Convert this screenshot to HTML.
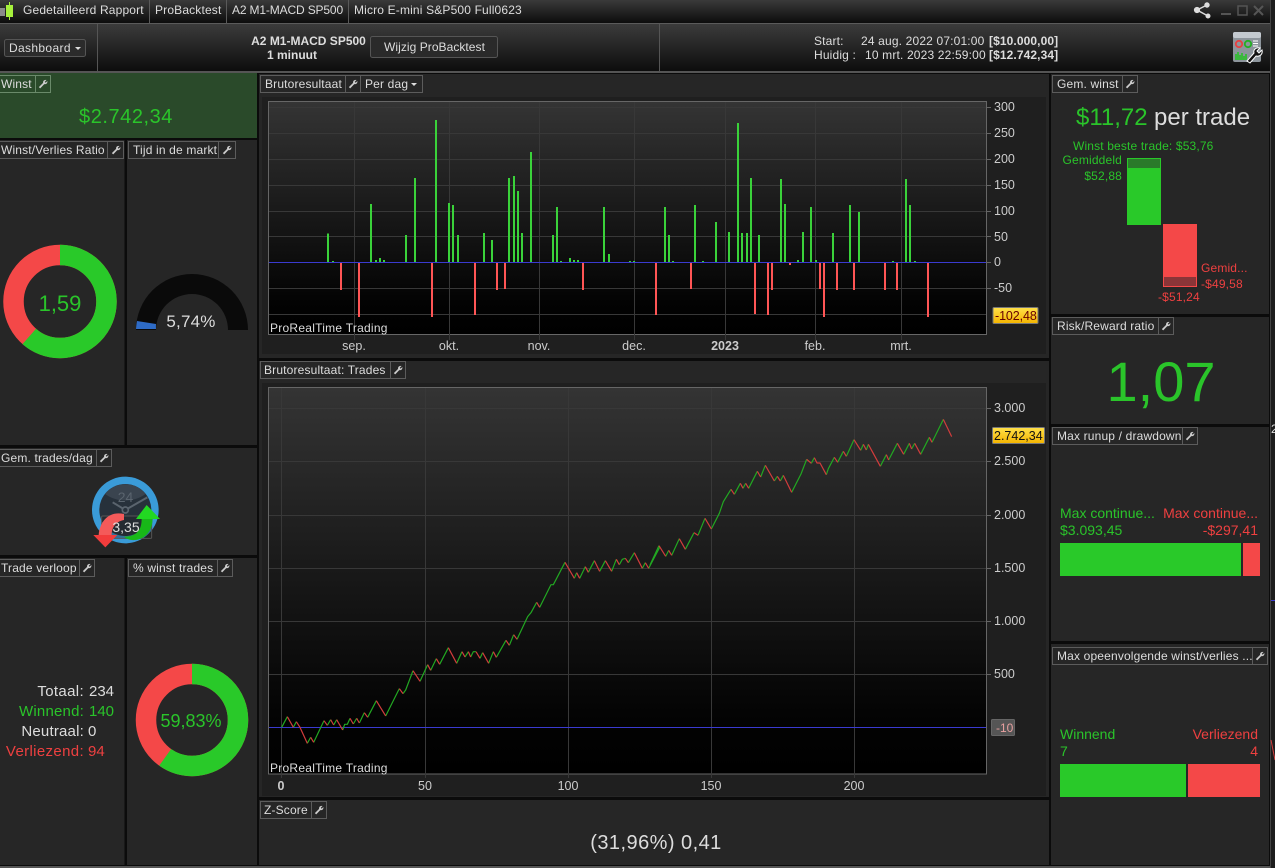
<!DOCTYPE html>
<html lang="nl"><head><meta charset="utf-8"><title>Gedetailleerd Rapport</title>
<style>
html,body{margin:0;padding:0;background:#0b0b0b;width:1275px;height:868px;overflow:hidden}
svg{display:block}
text{font-family:"Liberation Sans",Arial,sans-serif;font-size:12px;letter-spacing:.16px;fill:#ddd}
.g{fill:#2ac42a}.r{fill:#ee4040}
.tab{fill:none;stroke:#5c5c5c;stroke-width:1}
.ax{font-size:12.5px;fill:#ccc;letter-spacing:0}
</style></head>
<body>
<svg width="1275" height="868" viewBox="0 0 1275 868" xmlns="http://www.w3.org/2000/svg">
<defs>
<linearGradient id="b1" x1="0" y1="0" x2="0" y2="1"><stop offset="0" stop-color="#3a3a3a"/><stop offset="1" stop-color="#0c0c0c"/></linearGradient>
<linearGradient id="b2" x1="0" y1="0" x2="0" y2="1"><stop offset="0" stop-color="#3b3b3b"/><stop offset="1" stop-color="#0d0d0d"/></linearGradient>
<linearGradient id="pl" x1="0" y1="0" x2="0" y2="1"><stop offset="0" stop-color="#343434"/><stop offset=".86" stop-color="#030303"/><stop offset="1" stop-color="#000"/></linearGradient>
<linearGradient id="gold" x1="0" y1="0" x2="0" y2="1"><stop offset="0" stop-color="#ffe14a"/><stop offset="1" stop-color="#f4b400"/></linearGradient>
<path id="w" transform="translate(1 1) scale(.85)" d="M1 9.500 6 4.600C5.600 2.600 7.400.6 10 1.200L8 3.200 9 4.400 11 2.400C11.500 5 9.400 6.600 7.400 6.100L2.600 11Z" fill="#ccc"/>
</defs>

<!-- title bar -->
<rect x="0" y="0" width="1270" height="23" fill="url(#b1)"/>
<rect x="0" y="23" width="1270" height="1" fill="#5a5a5a"/>
<rect x="1270" y="0" width="5" height="868" fill="#1d1d1d"/>
<rect x="1270" y="0" width="1" height="868" fill="#444"/>
<rect x="0" y="8" width="5" height="8" fill="#8a8a8a"/><rect x="6" y="5" width="7" height="12" fill="#a6f03c"/><rect x="9" y="2" width="1" height="18" fill="#a6f03c"/>
<rect x="149" y="0" width="1" height="23" fill="#5a5a5a"/><rect x="226" y="0" width="1" height="23" fill="#5a5a5a"/><rect x="348" y="0" width="1" height="23" fill="#5a5a5a"/>
<text x="23" y="14">Gedetailleerd Rapport</text>
<text x="155" y="14">ProBacktest</text>
<text x="232" y="14" style="letter-spacing:-.15px">A2 M1-MACD SP500</text>
<text x="354" y="14">Micro E-mini S&amp;P500 Full0623</text>
<!-- window icons -->
<g fill="#ddd" stroke="#ddd"><path d="M1197 10 1207 5M1197 10 1208 16" stroke-width="1.500" fill="none"/><circle cx="1197" cy="10" r="2.600"/><circle cx="1207" cy="5" r="2.200"/><circle cx="1208" cy="16" r="2"/></g>
<rect x="1221" y="13" width="10" height="2" fill="#555"/>
<rect x="1238" y="6" width="9" height="9" fill="none" stroke="#555" stroke-width="1.500"/>
<path d="M1254 6 1263 15M1263 6 1254 15" stroke="#555" stroke-width="2" fill="none"/>

<!-- toolbar -->
<rect x="0" y="24" width="1270" height="47" fill="url(#b2)"/>
<rect x="0" y="71" width="1270" height="2" fill="#555"/>
<rect x="97" y="24" width="1" height="47" fill="#555"/><rect x="659" y="24" width="1" height="47" fill="#555"/>
<rect x="4.500" y="39.500" width="81" height="17" rx="2" fill="#2b2b2b" stroke="#555"/>
<text x="9" y="52" style="letter-spacing:.35px">Dashboard</text><path d="M75 47h6l-3 3z" fill="#ddd"/>
<text x="308.500" y="45" text-anchor="middle" font-weight="bold" style="letter-spacing:0">A2 M1-MACD SP500</text>
<text x="292" y="59" text-anchor="middle" font-weight="bold" style="letter-spacing:0">1 minuut</text>
<rect x="370.500" y="36.500" width="127" height="21" rx="2" fill="#2a2a2a" stroke="#555"/>
<text x="434.500" y="51" text-anchor="middle" style="letter-spacing:.05px">Wijzig ProBacktest</text>
<text x="814" y="45">Start:</text><text x="861" y="45">24 aug. 2022 07:01:00</text><text x="989" y="45" font-weight="bold" style="letter-spacing:.1px">[$10.000,00]</text>
<text x="814" y="59">Huidig :</text><text x="865" y="59">10 mrt. 2023 22:59:00</text><text x="989" y="59" font-weight="bold" style="letter-spacing:.1px">[$12.742,34]</text>
<!-- tool icon -->
<rect x="1233" y="32" width="28" height="30" rx="2" fill="#8d959c"/><rect x="1233" y="32" width="28" height="6" rx="2" fill="#c4cad0"/>
<circle cx="1239" cy="44" r="3.200" fill="none" stroke="#e84040" stroke-width="1.800"/><circle cx="1248" cy="44" r="3.200" fill="none" stroke="#23b023" stroke-width="1.800"/>
<path d="M1253 41h5M1253 43.500h5M1253 46h5" stroke="#fff"/>
<path d="M1236 60v-6M1238 60v-8M1240 60v-5M1242 60v-7M1244 60v-4M1246 60v-6" stroke="#27c227" stroke-width="1.600"/>
<path d="M1247 61 1254 53C1253 50 1256 47 1260 48L1257 51 1259 53 1262 50C1263 54 1260 57 1256 56L1250 63Z" fill="#111" stroke="#fff"/>

<!-- panels -->
<g fill="#262626">
<rect x="0" y="73" width="257" height="65" fill="#2a4a2a"/>
<rect x="0" y="140" width="124.500" height="305"/><rect x="127" y="140" width="130" height="305"/>
<rect x="0" y="448" width="257" height="107"/>
<rect x="0" y="558" width="124.500" height="307"/><rect x="127" y="558" width="130" height="307"/>
<rect x="259" y="74" width="790" height="284"/><rect x="259" y="361" width="790" height="436"/><rect x="259" y="800" width="790" height="65"/>
<rect x="1051" y="74" width="218" height="240"/><rect x="1051" y="317" width="218" height="107"/><rect x="1051" y="427" width="218" height="214"/><rect x="1051" y="644" width="218" height="221"/>
</g>
<rect x="0" y="866" width="1270" height="2" fill="#555"/>

<!-- tabs -->
<g class="tab">
<path d="M-1 75.500H50.500V92.500H-1M35.500 75.500V92.500" stroke="#6a8a6a"/>
<path d="M-1 141.500H123.500V158.500H-1M107.500 141.500V158.500"/>
<path d="M128.500 141.500H235.500V158.500H128.500ZM218.500 141.500V158.500"/>
<path d="M-1 449.500H111.500V466.500H-1M96.500 449.500V466.500"/>
<path d="M-1 559.500H94.500V576.500H-1M79.500 559.500V576.500"/>
<path d="M128.500 559.500H232.500V576.500H128.500ZM217.500 559.500V576.500"/>
<path d="M260.500 75.500H422.500V92.500H260.500ZM345.500 75.500V92.500M360.500 75.500V92.500"/>
<path d="M260.500 361.500H405.500V378.500H260.500ZM390.500 361.500V378.500"/>
<path d="M260.500 801.500H326.500V818.500H260.500ZM311.500 801.500V818.500"/>
<path d="M1052.500 75.500H1137.500V92.500H1052.500ZM1122.500 75.500V92.500"/>
<path d="M1052.500 317.500H1173.500V334.500H1052.500ZM1158.500 317.500V334.500"/>
<path d="M1052.500 427.500H1197.500V444.500H1052.500ZM1182.500 427.500V444.500"/>
<path d="M1052.500 647.500H1267.500V664.500H1052.500ZM1252.500 647.500V664.500"/>
</g>
<text x="1" y="88">Winst</text><use href="#w" x="37" y="78"/>
<text x="1" y="154">Winst/Verlies Ratio</text><use href="#w" x="110" y="144"/>
<text x="133" y="154">Tijd in de markt</text><use href="#w" x="221" y="144"/>
<text x="1" y="462">Gem. trades/dag</text><use href="#w" x="98" y="452"/>
<text x="1" y="572">Trade verloop</text><use href="#w" x="81" y="562"/>
<text x="133" y="572">% winst trades</text><use href="#w" x="219" y="562"/>
<text x="265" y="88">Brutoresultaat</text><use href="#w" x="347" y="78"/><text x="365" y="88">Per dag</text><path d="M411 83h6l-3 3z" fill="#ddd"/>
<text x="264" y="374">Brutoresultaat: Trades</text><use href="#w" x="392" y="364"/>
<text x="264" y="814">Z-Score</text><use href="#w" x="313" y="804"/>
<text x="1057" y="88">Gem. winst</text><use href="#w" x="1124" y="78"/>
<text x="1057" y="330">Risk/Reward ratio</text><use href="#w" x="1160" y="320"/>
<text x="1057" y="440">Max runup / drawdown</text><use href="#w" x="1184" y="430"/>
<text x="1057" y="660">Max opeenvolgende winst/verlies ...</text><use href="#w" x="1254" y="650"/>

<!-- left values -->
<text x="126" y="123" text-anchor="middle" class="g" style="font-size:20px;letter-spacing:.55px">$2.742,34</text>
<circle cx="60" cy="301.500" r="46.500" fill="none" stroke="#f44848" stroke-width="20.500"/>
<circle cx="60" cy="301.500" r="46.500" fill="none" stroke="#29c929" stroke-width="20.500" stroke-dasharray="179.400 292.200" transform="rotate(-90 60 301.500)"/>
<text x="60" y="311" text-anchor="middle" class="g" style="font-size:22px;letter-spacing:0">1,59</text>
<path d="M136 330A56 56 0 0 1 248 330H228A36 36 0 0 0 156 330Z" fill="#0a0a0a"/>
<path d="M136 329A56 56 0 0 1 137 321L156 324A36 36 0 0 0 156 329Z" fill="#2e6bc6"/>
<text x="191" y="327" text-anchor="middle" style="font-size:17px;letter-spacing:.2px">5,74%</text>

<g transform="translate(0,440) scale(.3333)">
<circle cx="376" cy="210" r="100" fill="#3a9bd8"/><circle cx="376" cy="210" r="78" fill="#27313b"/>
<path d="M315 162A78 78 0 0 1 437 162C400 188 352 188 315 162Z" fill="#3a444f"/>
<path d="M338 187 376 210 442 172" stroke="#5a646e" stroke-width="6" fill="none"/><circle cx="376" cy="210" r="9" fill="#27313b" stroke="#5a646e" stroke-width="5"/>
<rect x="305" y="228" width="150" height="67" fill="#222" fill-opacity=".35" stroke="#555" stroke-width="3" rx="3"/>
<path d="M372 222C330 212 300 240 296 285L335 285C335 265 345 245 372 240Z" fill="#f45a5a"/>
<path d="M280 285H352L316 322Z" fill="#f23c3c"/>
<path d="M425 237C425 270 410 290 372 290 390 310 455 305 458 237Z" fill="#18b818"/>
<path d="M408 237H480L440 195Z" fill="#22d822"/>
</g>
<text x="125.500" y="502" text-anchor="middle" style="font-size:14px;fill:#5a646e;letter-spacing:0">24</text>
<text x="126" y="532" text-anchor="middle" style="font-size:14px;letter-spacing:0;fill:#ddd">3,35</text>

<text x="84" y="696" text-anchor="end" style="font-size:15px;letter-spacing:.35px">Totaal:</text><text x="89" y="696" style="font-size:15px;letter-spacing:0">234</text>
<text x="84" y="716" text-anchor="end" class="g" style="font-size:15px;letter-spacing:.2px">Winnend:</text><text x="89" y="716" class="g" style="font-size:15px;letter-spacing:0">140</text>
<text x="84" y="736" text-anchor="end" style="font-size:15px;letter-spacing:.2px">Neutraal:</text><text x="88" y="736" style="font-size:15px;letter-spacing:0">0</text>
<text x="84" y="756" text-anchor="end" class="r" style="font-size:15px;letter-spacing:.35px">Verliezend:</text><text x="88" y="756" class="r" style="font-size:15px;letter-spacing:0">94</text>
<circle cx="192" cy="720" r="46" fill="none" stroke="#f44848" stroke-width="20.500"/>
<circle cx="192" cy="720" r="46" fill="none" stroke="#29c929" stroke-width="20.500" stroke-dasharray="172.900 289" transform="rotate(-90 192 720)"/>
<text x="191" y="727" text-anchor="middle" class="g" style="font-size:18px;letter-spacing:0">59,83%</text>

<!-- chart 1 -->
<rect x="262" y="97" width="784" height="257" fill="#1f1f1f"/>
<rect x="268.500" y="101.500" width="718" height="233" fill="url(#pl)" stroke="#666" stroke-width="1"/>
<path d="M269 107.500H986M269 133.500H986M269 159.500H986M269 185.500H986M269 211.500H986M269 236.500H986M269 288.500H986M269 314.500H986M354.500 102V340M449.500 102V340M539.500 102V340M634.500 102V340M725.500 102V340M815.500 102V340M901.500 102V340" stroke="#383838" fill="none"/>
<path d="M987 107.500H991M987 133.500H991M987 159.500H991M987 185.500H991M987 211.500H991M987 236.500H991M987 262.500H991M987 288.500H991" stroke="#666" fill="none"/>
<g transform="translate(260,95) scale(.33333)" stroke-width="6" fill="none" shape-rendering="crispEdges">
<path stroke="#3ad23a" d="M204 501V415M219 501V498M333 501V327M348 501V495M360 501V489M372 501V495M438 501V420M465 501V249M528 501V75M567 501V324M579 501V330M594 501V420M672 501V414M696 501V435M747 501V249M762 501V243M774 501V288M786 501V414M813 501V171M879 501V420M891 501V336M903 501V498M930 501V489M942 501V495M954 501V495M1032 501V336M1047 501V477M1110 501V498M1122 501V498"/>
<path stroke="#ff5555" d="M243 504V585M297 504V666M516 504V666M645 504V660M711 504V585M735 504V582M969 504V585M1188 504V660"/>
</g>
<g transform="translate(650,95) scale(.33333)" stroke-width="6" fill="none" shape-rendering="crispEdges">
<path stroke="#3ad23a" d="M45 501V336M57 501V420M69 501V498M135 501V330M159 501V498M198 501V381M237 501V411M264 501V84M276 501V414M291 501V414M303 501V249M327 501V420M393 501V252M405 501V327M444 501V495M459 501V411M483 501V336M498 501V495M549 501V414M600 501V330M627 501V351M729 501V498M768 501V252M780 501V330M795 501V498"/>
<path stroke="#ff5555" d="M123 504V582M315 504V657M354 504V660M366 504V585M420 504V510M510 504V582M522 504V666M561 504V585M612 504V585M705 504V585M741 504V585M834 504V666"/>
</g>
<rect x="269" y="262" width="717" height="1" fill="#3a3ad0"/>
<text x="270" y="332" style="letter-spacing:.25px">ProRealTime Trading</text>
<text x="354" y="350" text-anchor="middle" class="ax">sep.</text><text x="449" y="350" text-anchor="middle" class="ax">okt.</text><text x="539" y="350" text-anchor="middle" class="ax">nov.</text><text x="634" y="350" text-anchor="middle" class="ax">dec.</text><text x="725" y="350" text-anchor="middle" class="ax" font-weight="bold">2023</text><text x="815" y="350" text-anchor="middle" class="ax">feb.</text><text x="901" y="350" text-anchor="middle" class="ax">mrt.</text>
<text x="994" y="111" class="ax">300</text><text x="994" y="137" class="ax">250</text><text x="994" y="163" class="ax">200</text><text x="994" y="189" class="ax">150</text><text x="994" y="215" class="ax">100</text><text x="994" y="241" class="ax">50</text><text x="994" y="266" class="ax">0</text><text x="994" y="292" class="ax">-50</text>
<rect x="993" y="307.500" width="45" height="16" rx="1" fill="url(#gold)" stroke="#777"/>
<text x="995" y="320" style="font-size:12.500px;fill:#600;letter-spacing:-.1px">-102,48</text>

<!-- chart 2 -->
<rect x="262" y="383" width="784" height="413" fill="#1f1f1f"/>
<rect x="268.500" y="387.500" width="718" height="386.500" fill="url(#pl)" stroke="#666" stroke-width="1"/>
<path d="M269 408.500H986M269 461.500H986M269 515.500H986M269 568.500H986M269 621.500H986M269 674.500H986M281.500 388V778M425.500 388V778M568.500 388V778M711.500 388V778M854.500 388V778" stroke="#383838" fill="none"/>
<path d="M987 408.500H991M987 461.500H991M987 515.500H991M987 568.500H991M987 621.500H991M987 674.500H991" stroke="#666" fill="none"/>
<rect x="269" y="727" width="717" height="1" fill="#3a3ad0"/>
<g transform="translate(260,540) scale(.33333)" fill="none" stroke-width="3.600" stroke-linejoin="round">
<path stroke="#22a822" d="M65 562 82 530M100 562 109 545M142 610 152 592M161 607 192 542M202 556 212 539M221 555 230 539M248 570 254 553 262 553 270 535M280 552 290 535M298 549 313 518M323 532 349 482M377 528 418 446M429 461 437 450 459 392M480 424 503 374M512 391 529 356M539 373 565 323M590 370 606 335M615 351 625 335M632 351 640 335 648 335M660 355 668 338M686 370 700 335M709 352 738 301M748 316 761 284M771 298 803 230 813 218 830 187M839 202 873 134 880 134 915 67M943 115 950 98M959 115 976 80M985 97 1003 62M1019 94 1036 62M1055 94 1069 58M1078 74 1087 58 1096 55M1105 68 1123 38M1147 85 1156 68M1166 85 1200 20"/>
<path stroke="#d23c3c" d="M82 530 100 562M109 545 120 562 142 610M152 592 161 607M192 542 202 556M212 539 221 555M230 539 248 570M270 535 280 552M290 535 298 549M313 518 323 532M349 482 377 528M418 446 429 461M459 392 480 424M503 374 512 391M529 356 539 373M565 323 590 370M606 335 615 351M625 335 632 351M648 335 660 355M668 338 686 370M700 335 709 352M738 301 748 316M761 284 771 298M830 187 839 202M915 67 943 115M950 98 959 115M976 80 985 97M1003 62 1019 94M1036 62 1055 94M1069 58 1078 74M1096 55 1105 68M1123 38 1147 85M1156 68 1166 85"/>
</g>
<g transform="translate(650,390) scale(.33333)" fill="none" stroke-width="3.600" stroke-linejoin="round">
<path stroke="#22a822" d="M0 525 27 467M47 499 56 481M65 496 88 446M106 478 132 428M144 436 165 385M184 417 208 370 220 335 243 298M253 313 271 280M279 295 287 280M296 295 322 244M332 261 346 226M373 273 382 259M391 273 400 256M425 307 453 252 470 208M484 220 493 203M529 254 535 236 553 202M563 217 580 184M589 199 612 149M632 181 640 163M649 180 655 163M691 229 709 194M716 210 742 160M761 193 778 160M785 177 794 160M812 193 838 142M846 157 880 88"/>
<path stroke="#d23c3c" d="M27 467 47 499M56 481 65 496M88 446 106 478M132 428 144 436M165 385 184 417M243 298 253 313M271 280 279 295M287 280 296 295M322 244 332 261M346 226 373 273M382 259 391 273M400 256 425 307M470 208 484 220M493 203 501 219 510 219 529 254M553 202 563 217M580 184 589 199M612 149 632 181M640 163 649 180M655 163 691 229M709 194 716 210M742 160 761 193M778 160 785 177M794 160 812 193M838 142 846 157M880 88 905 140"/>
</g>
<text x="270" y="772" style="letter-spacing:.25px">ProRealTime Trading</text>
<text x="281" y="790" text-anchor="middle" class="ax" font-weight="bold">0</text><text x="425" y="790" text-anchor="middle" class="ax">50</text><text x="568" y="790" text-anchor="middle" class="ax">100</text><text x="711" y="790" text-anchor="middle" class="ax">150</text><text x="854" y="790" text-anchor="middle" class="ax">200</text>
<text x="994" y="412" class="ax">3.000</text><text x="994" y="465" class="ax">2.500</text><text x="994" y="519" class="ax">2.000</text><text x="994" y="572" class="ax">1.500</text><text x="994" y="625" class="ax">1.000</text><text x="994" y="678" class="ax">500</text>
<rect x="992.500" y="427.500" width="52" height="16" rx="1" fill="url(#gold)" stroke="#777"/>
<text x="994" y="440" style="font-size:12.500px;fill:#111;letter-spacing:0">2.742,34</text>
<rect x="991.500" y="719.500" width="23" height="16" rx="1" fill="#555" stroke="#666"/>
<text x="996" y="732" style="font-size:12px;fill:#e8a0a0;letter-spacing:0">-10</text>

<text x="656" y="849" text-anchor="middle" style="font-size:20px;letter-spacing:.45px">(31,96%) 0,41</text>

<!-- right: gem winst -->
<text x="1076" y="125" class="g" style="font-size:24px;letter-spacing:0">$11,72</text>
<text x="1154" y="125" style="font-size:24px;letter-spacing:0">per trade</text>
<text x="1073" y="150" class="g" style="letter-spacing:.15px">Winst beste trade: $53,76</text>
<text x="1122" y="164" text-anchor="end" class="g">Gemiddeld</text>
<text x="1122" y="180" text-anchor="end" class="g">$52,88</text>
<rect x="1127" y="158" width="34" height="67" fill="#29c929"/><rect x="1128" y="159" width="32" height="9" fill="#2a7a2a"/>
<rect x="1163" y="224" width="34" height="63" fill="#f44848"/><rect x="1164" y="277" width="32" height="9" fill="#8a3538"/>
<text x="1201" y="272" class="r">Gemid...</text>
<text x="1201" y="288" class="r">-$49,58</text>
<text x="1158" y="301" class="r">-$51,24</text>

<text x="1161" y="401" text-anchor="middle" class="g" style="font-size:56px;letter-spacing:0">1,07</text>

<text x="1060" y="518" class="g" style="font-size:14px;letter-spacing:0">Max continue...</text>
<text x="1258" y="518" text-anchor="end" class="r" style="font-size:14px;letter-spacing:0">Max continue...</text>
<text x="1060" y="535" class="g" style="font-size:14px;letter-spacing:0">$3.093,45</text>
<text x="1258" y="535" text-anchor="end" class="r" style="font-size:14px;letter-spacing:0">-$297,41</text>
<rect x="1060" y="543" width="181" height="33" fill="#29c929"/><rect x="1243" y="543" width="17" height="33" fill="#f44848"/>

<text x="1060" y="739" class="g" style="font-size:14px;letter-spacing:0">Winnend</text>
<text x="1258" y="739" text-anchor="end" class="r" style="font-size:14px;letter-spacing:0">Verliezend</text>
<text x="1060" y="756" class="g" style="font-size:14px;letter-spacing:0">7</text>
<text x="1258" y="756" text-anchor="end" class="r" style="font-size:14px;letter-spacing:0">4</text>
<rect x="1060" y="764" width="126" height="33" fill="#29c929"/><rect x="1188" y="764" width="72" height="33" fill="#f44848"/>

<!-- right edge fragments -->
<text x="1271" y="433" style="font-size:12px;letter-spacing:0">2</text>
<path d="M1271 740 1275 760" stroke="#d23c3c" fill="none"/>
<rect x="1271" y="600" width="4" height="1" fill="#3a3ad0"/>
</svg>
</body></html>
